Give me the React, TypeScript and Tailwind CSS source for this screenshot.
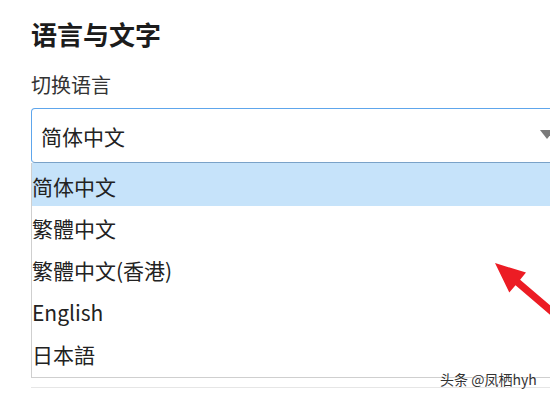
import React from "react";

const options = ["简体中文", "繁體中文", "繁體中文(香港)", "English", "日本語"];

export default function App() {
  return (
    <div className="relative w-[550px] h-[400px] overflow-hidden bg-white font-['Noto_Sans_CJK_SC','Noto_Sans',sans-serif] text-[#2b2b2b]">
      <div className="pl-[31px] pt-[19px]">
        <h1 className="text-[26px] leading-[30px] font-bold text-[#1c1c1c]">语言与文字</h1>
        <div className="mt-[24px] text-[20px] leading-[24px] text-[#333]">切换语言</div>
        <div className="mt-[11px] w-[540px] h-[55px] rounded-[4px] border border-[#5ea6ec] border-b-[#7aa2c8] flex items-center justify-between pl-[9px] pr-[16px] text-[21px] text-[#222]">
          <span className="leading-[28px]">简体中文</span>
          <svg width="14" height="9" viewBox="0 0 14 9" className="mt-[-2px]">
            <polygon points="0,0 14,0 7,9" fill="#7a7a7a" />
          </svg>
        </div>
        <ul className="w-[540px] border-l border-b border-[#cfcfcf] pb-[3px]">
          {options.map((o, i) => (
            <li
              key={o}
              className={
                (i === 0 ? "h-[43px] bg-[#c6e3fa] " : "h-[42px] ") +
                "flex items-center pt-[2px] text-[21px] leading-[28px] text-[#222]"
              }
            >
              {o}
            </li>
          ))}
        </ul>
        <div className="mt-[9px] w-[540px] border-t border-[#e6e6e6]" />
      </div>

      <svg className="absolute left-0 top-0 pointer-events-none" width="550" height="400" viewBox="0 0 550 400">
        <polygon
          points="495,263 526,272.6 520.1,279.8 565.7,318.8 561.1,324.2 515.5,285.2 509.3,292.4"
          fill="#ec1c24"
        />
      </svg>

      <div className="absolute left-[440px] top-[369px] text-[14px] leading-[20px] text-[#333] [text-shadow:0_0_2px_#fff,0_0_2px_#fff]">
        头条 @凤栖hyh
      </div>
    </div>
  );
}
